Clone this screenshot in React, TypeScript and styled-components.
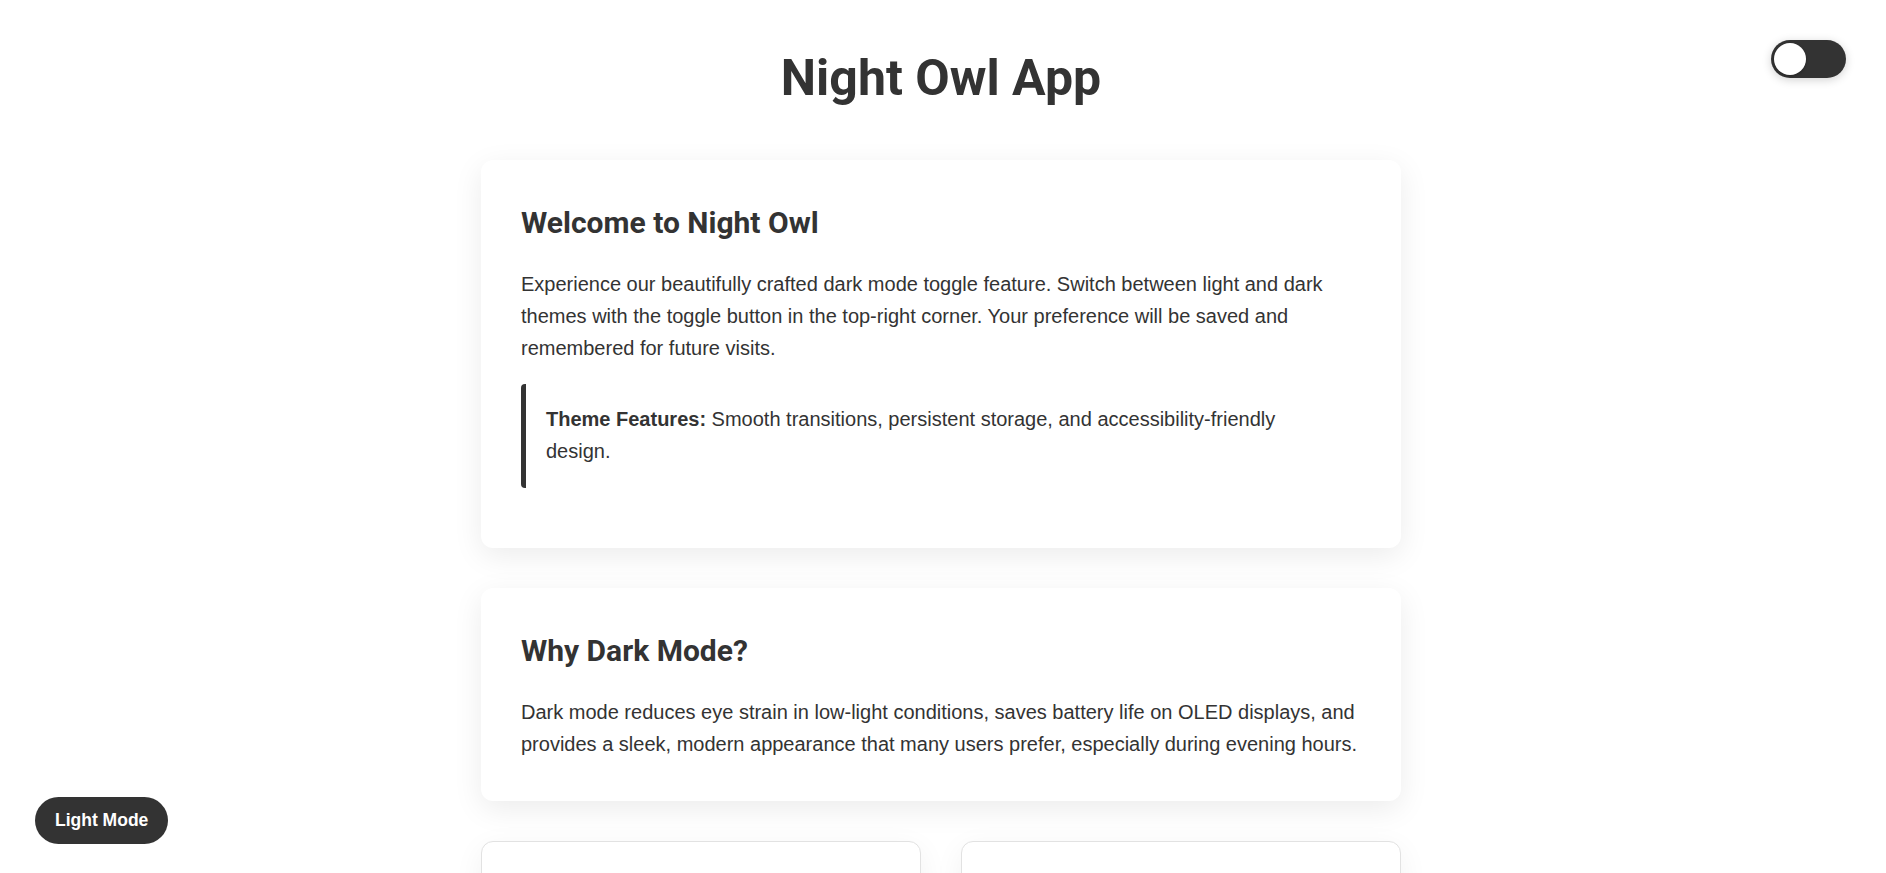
import React from "react";
import styled, { createGlobalStyle } from "styled-components";

const GlobalStyle = createGlobalStyle`
  html, body {
    margin: 0;
    padding: 0;
    background: #ffffff;
  }
  body {
    font-family: "Liberation Sans", Arial, sans-serif;
    color: #333333;
  }
  * { box-sizing: border-box; }
`;

const Page = styled.div`
  padding: 49px 24px 80px 20px;
`;

const Container = styled.main`
  max-width: 920px;
  margin: 0 auto;
  display: flex;
  flex-direction: column;
`;

const Title = styled.h1`
  margin: 0 0 53px;
  font-family: Roboto, "Liberation Sans", sans-serif;
  font-weight: 700;
  font-size: 50px;
  line-height: 58px;
  text-align: center;
  color: #333333;
`;

const Card = styled.section`
  background: #ffffff;
  border-radius: 12px;
  padding: 40px 36px 40px 40px;
  margin-bottom: 40px;
  box-shadow: 0 8px 30px rgba(0, 0, 0, 0.08);
`;

const CardTitle = styled.h2`
  margin: 0 0 23px;
  font-family: Roboto, "Liberation Sans", sans-serif;
  font-weight: 700;
  font-size: 30px;
  line-height: 46px;
  color: #333333;
`;

const Text = styled.p`
  margin: 0 0 20px;
  font-size: 20px;
  line-height: 31.8px;
  color: #333333;
  &:last-child { margin-bottom: 0; }
`;

const Quote = styled.blockquote`
  margin: 0 0 20px;
  padding: 20px 22px 20px 20px;
  border-left: 5px solid #333333;
  border-radius: 4px;
  font-size: 20px;
  line-height: 31.8px;
  color: #333333;
  strong { font-weight: 700; }
`;

const Grid = styled.div`
  display: grid;
  grid-template-columns: 1fr 1fr;
  gap: 40px;
`;

const SmallCard = styled.section`
  background: #ffffff;
  border: 1px solid #e2e2e2;
  border-radius: 12px;
  padding: 40px;
  box-shadow: 0 8px 30px rgba(0, 0, 0, 0.06);
`;

const Toggle = styled.button`
  position: fixed;
  top: 40px;
  right: 40px;
  width: 75px;
  height: 38px;
  padding: 0 3px;
  border: none;
  border-radius: 19px;
  background: #333333;
  display: flex;
  align-items: center;
  cursor: pointer;
  box-shadow: 0 2px 10px rgba(0, 0, 0, 0.18);
`;

const Knob = styled.span`
  width: 32px;
  height: 32px;
  border-radius: 50%;
  background: #ffffff;
  box-shadow: 0 1px 3px rgba(0, 0, 0, 0.3);
`;

const ModeButton = styled.button`
  position: fixed;
  left: 35px;
  bottom: 29px;
  padding: 14px 20px;
  border: none;
  border-radius: 24px;
  background: #333333;
  color: #ffffff;
  font-family: "Liberation Sans", Arial, sans-serif;
  font-weight: 700;
  font-size: 17.5px;
  line-height: 19px;
  cursor: pointer;
`;

export default function App() {
  return (
    <>
      <GlobalStyle />
      <Page>
        <Container>
          <Title>Night Owl App</Title>
          <Card>
            <CardTitle>Welcome to Night Owl</CardTitle>
            <Text>
              Experience our beautifully crafted dark mode toggle feature. Switch between light and dark
              themes with the toggle button in the top-right corner. Your preference will be saved and
              remembered for future visits.
            </Text>
            <Quote>
              <strong>Theme Features:</strong> Smooth transitions, persistent storage, and
              accessibility-friendly design.
            </Quote>
          </Card>
          <Card>
            <CardTitle>Why Dark Mode?</CardTitle>
            <Text>
              Dark mode reduces eye strain in low-light conditions, saves battery life on OLED displays, and
              provides a sleek, modern appearance that many users prefer, especially during evening hours.
            </Text>
          </Card>
          <Grid>
            <SmallCard>
              <CardTitle>Eye Comfort</CardTitle>
              <Text>Reduced glare and softer contrast make late-night reading easier on your eyes.</Text>
            </SmallCard>
            <SmallCard>
              <CardTitle>Battery Saving</CardTitle>
              <Text>Darker pixels use less power on OLED screens, extending your device's battery life.</Text>
            </SmallCard>
          </Grid>
        </Container>
      </Page>
      <Toggle aria-label="Toggle dark mode">
        <Knob />
      </Toggle>
      <ModeButton>Light Mode</ModeButton>
    </>
  );
}
